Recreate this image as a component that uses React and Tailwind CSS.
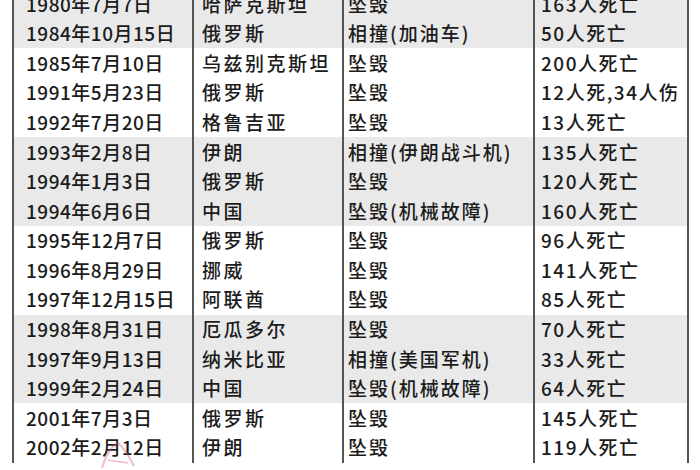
import React from 'react';

const rows = [
  ['1980年7月7日', '哈萨克斯坦', '坠毁', '163人死亡', true],
  ['1984年10月15日', '俄罗斯', '相撞(加油车)', '50人死亡', true],
  ['1985年7月10日', '乌兹别克斯坦', '坠毁', '200人死亡', false],
  ['1991年5月23日', '俄罗斯', '坠毁', '12人死,34人伤', false],
  ['1992年7月20日', '格鲁吉亚', '坠毁', '13人死亡', false],
  ['1993年2月8日', '伊朗', '相撞(伊朗战斗机)', '135人死亡', true],
  ['1994年1月3日', '俄罗斯', '坠毁', '120人死亡', true],
  ['1994年6月6日', '中国', '坠毁(机械故障)', '160人死亡', true],
  ['1995年12月7日', '俄罗斯', '坠毁', '96人死亡', false],
  ['1996年8月29日', '挪威', '坠毁', '141人死亡', false],
  ['1997年12月15日', '阿联酋', '坠毁', '85人死亡', false],
  ['1998年8月31日', '厄瓜多尔', '坠毁', '70人死亡', true],
  ['1997年9月13日', '纳米比亚', '相撞(美国军机)', '33人死亡', true],
  ['1999年2月24日', '中国', '坠毁(机械故障)', '64人死亡', true],
  ['2001年7月3日', '俄罗斯', '坠毁', '145人死亡', false],
  ['2002年2月12日', '伊朗', '坠毁', '119人死亡', false],
];

export default function App() {
  return (
    <div
      className="relative w-[700px] h-[470px] overflow-hidden bg-white text-[#1c1c1c] text-[19px] font-medium"
      style={{ fontFamily: '"Noto Sans CJK SC", "Noto Sans", sans-serif' }}
    >
      <div className="-mt-[11px] ml-[12px] w-[677px]">
        {rows.map(([date, place, kind, toll, gray], i) => (
          <div
            key={i}
            className={`grid grid-cols-[182px_150px_191px_154px] h-[29.6px] items-center ${gray ? 'bg-[#e9e9e9]' : 'bg-white'}`}
          >
            <div className="h-full flex items-center pl-[12px] border-l-2 border-r-2 border-[#555] tracking-[0.5px] whitespace-nowrap">{date}</div>
            <div className="h-full flex items-center pl-[8px] border-r-2 border-[#555] tracking-[2.5px] whitespace-nowrap">{place}</div>
            <div className="h-full flex items-center pl-[4px] border-r-2 border-[#555] tracking-[2px] whitespace-nowrap">{kind}</div>
            <div className="h-full flex items-center pl-[6px] border-r-2 border-[#555] tracking-[1.5px] whitespace-nowrap">{toll}</div>
          </div>
        ))}
      </div>
      <svg className="absolute left-[98px] top-[440px] opacity-40" width="40" height="30" viewBox="0 0 40 30">
        <path d="M4 28 Q10 8 20 3 Q28 10 36 26" fill="none" stroke="#d9538a" strokeWidth="2" />
        <path d="M10 20 L30 23" fill="none" stroke="#d9538a" strokeWidth="1.5" />
      </svg>
    </div>
  );
}
